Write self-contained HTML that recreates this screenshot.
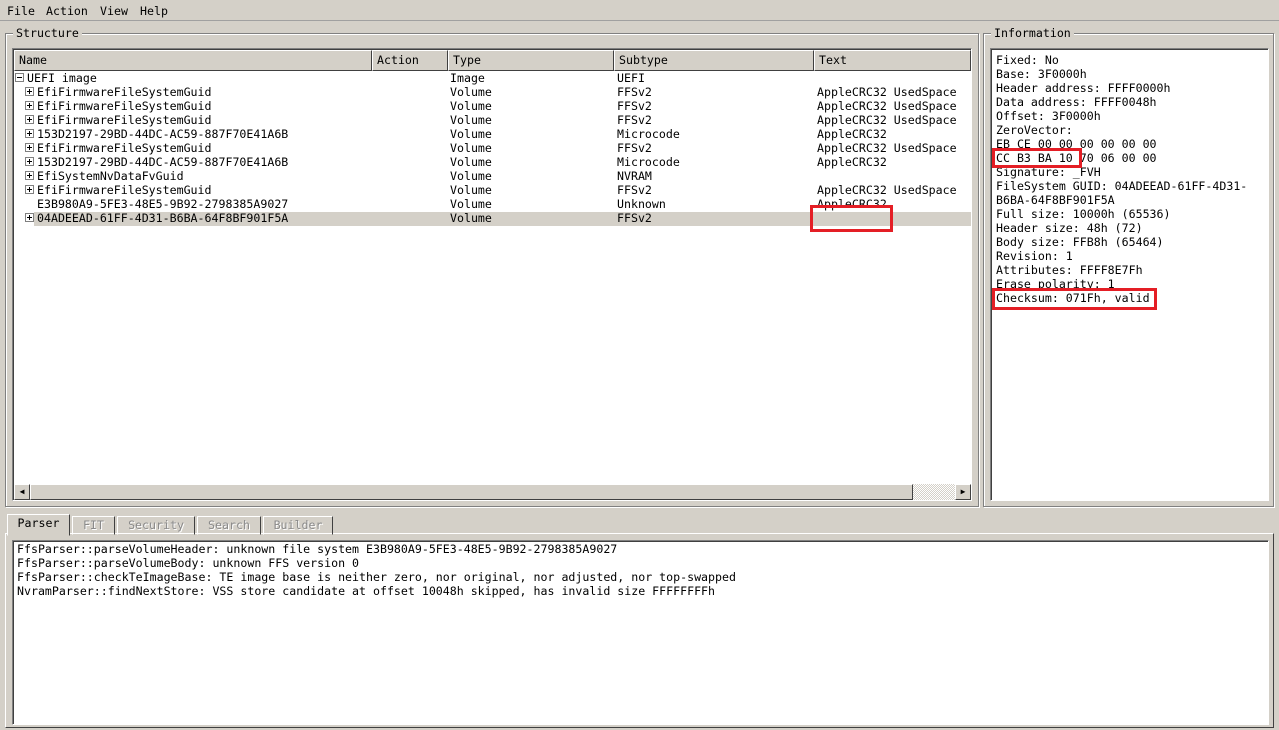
<!DOCTYPE html>
<html><head><meta charset="utf-8"><style>
*{margin:0;padding:0;box-sizing:border-box}
body{width:1279px;height:730px;background:#d4d0c8;position:relative;overflow:hidden;font-family:"DejaVu Sans Mono","Liberation Mono",monospace;font-size:11.6px;color:#000}
.a{position:absolute;white-space:pre;line-height:14px}
.grp{position:absolute;border:1px solid #808080;box-shadow:1px 1px 0 #fff, inset 1px 1px 0 #fff}
.lbl{position:absolute;background:#d4d0c8;padding:0 3px;line-height:14px}
.sunk{position:absolute;background:#fff;border:1px solid;border-color:#808080 #fff #fff #808080;box-shadow:inset 1px 1px 0 #404040}
.hd{position:absolute;top:0;height:21px;border:1px solid;border-color:#fff #404040 #404040 #fff;background:#d4d0c8;line-height:19px;padding-left:4px}
.red{position:absolute;border:3px solid #e41e25}
.pl{position:absolute;width:9px;height:9px;border:1px solid #808080;background:#fff}
.pl:before{content:"";position:absolute;left:1px;top:3px;width:5px;height:1px;background:#000}
.pl.p:after{content:"";position:absolute;left:3px;top:1px;width:1px;height:5px;background:#000}
.tab{position:absolute;top:516px;height:19px;border:1px solid;border-color:#fff #404040 transparent #fff;line-height:17px;text-align:center;color:#8a8a8a;text-shadow:1px 1px 0 #fff}
</style></head><body>
<div class="a" style="left:7px;top:4px">File</div>
<div class="a" style="left:46px;top:4px">Action</div>
<div class="a" style="left:100px;top:4px">View</div>
<div class="a" style="left:140px;top:4px">Help</div>
<div style="position:absolute;left:0;top:20px;width:1279px;height:1px;background:#a0a0a0"></div>

<div class="grp" style="left:5px;top:33px;width:974px;height:474px"></div>
<div class="lbl" style="left:13px;top:26px">Structure</div>
<div class="grp" style="left:983px;top:33px;width:291px;height:474px"></div>
<div class="lbl" style="left:991px;top:26px">Information</div>

<div class="sunk" style="left:12px;top:48px;width:960px;height:453px">
<div class="hd" style="left:1px;top:1px;width:358px">Name</div>
<div class="hd" style="left:359px;top:1px;width:76px">Action</div>
<div class="hd" style="left:435px;top:1px;width:166px">Type</div>
<div class="hd" style="left:601px;top:1px;width:200px">Subtype</div>
<div class="hd" style="left:801px;top:1px;width:157px">Text</div>
<div style="position:absolute;left:21px;top:163px;width:937px;height:14px;background:#d4d0c8"></div>
<div style="position:absolute;left:1px;top:435px;width:957px;height:16px;background:#d4d0c8">
<div style="position:absolute;left:0;top:0;width:16px;height:16px;border:1px solid;border-color:#fff #404040 #404040 #fff;font-size:8px;line-height:14px;text-align:center">◀</div>
<div style="position:absolute;left:16px;top:0;width:883px;height:16px;border:1px solid;border-color:#fff #404040 #404040 #fff"></div>
<div style="position:absolute;left:899px;top:0;width:42px;height:16px;background:repeating-conic-gradient(#fff 0 25%,#d4d0c8 0 50%) 0 0/2px 2px"></div>
<div style="position:absolute;left:941px;top:0;width:16px;height:16px;border:1px solid;border-color:#fff #404040 #404040 #fff;font-size:8px;line-height:14px;text-align:center">▶</div>
</div>
</div>
<div class="pl" style="left:15px;top:73px"></div>
<div class="pl p" style="left:25px;top:87px"></div><div class="pl p" style="left:25px;top:101px"></div><div class="pl p" style="left:25px;top:115px"></div><div class="pl p" style="left:25px;top:129px"></div><div class="pl p" style="left:25px;top:143px"></div><div class="pl p" style="left:25px;top:157px"></div><div class="pl p" style="left:25px;top:171px"></div><div class="pl p" style="left:25px;top:185px"></div><div class="pl p" style="left:25px;top:213px"></div>
<div class="a" style="left:27px;top:71px">UEFI image</div>
<div class="a" style="left:37px;top:85px">EfiFirmwareFileSystemGuid
EfiFirmwareFileSystemGuid
EfiFirmwareFileSystemGuid
153D2197-29BD-44DC-AC59-887F70E41A6B
EfiFirmwareFileSystemGuid
153D2197-29BD-44DC-AC59-887F70E41A6B
EfiSystemNvDataFvGuid
EfiFirmwareFileSystemGuid
E3B980A9-5FE3-48E5-9B92-2798385A9027
04ADEEAD-61FF-4D31-B6BA-64F8BF901F5A</div>
<div class="a" style="left:450px;top:71px">Image
Volume
Volume
Volume
Volume
Volume
Volume
Volume
Volume
Volume
Volume</div>
<div class="a" style="left:617px;top:71px">UEFI
FFSv2
FFSv2
FFSv2
Microcode
FFSv2
Microcode
NVRAM
FFSv2
Unknown
FFSv2</div>
<div class="a" style="left:817px;top:85px;width:152px;overflow:hidden">AppleCRC32 UsedSpace
AppleCRC32 UsedSpace
AppleCRC32 UsedSpace
AppleCRC32
AppleCRC32 UsedSpace
AppleCRC32

AppleCRC32 UsedSpace
AppleCRC32</div>
<div class="red" style="left:810px;top:205px;width:83px;height:27px"></div>

<div class="sunk" style="left:990px;top:48px;width:279px;height:453px"></div>
<div class="a" style="left:996px;top:53px">Fixed: No
Base: 3F0000h
Header address: FFFF0000h
Data address: FFFF0048h
Offset: 3F0000h
ZeroVector:
EB CE 00 00 00 00 00 00
CC B3 BA 10 70 06 00 00
Signature: _FVH
FileSystem GUID: 04ADEEAD-61FF-4D31-
B6BA-64F8BF901F5A
Full size: 10000h (65536)
Header size: 48h (72)
Body size: FFB8h (65464)
Revision: 1
Attributes: FFFF8E7Fh
Erase polarity: 1
Checksum: 071Fh, valid</div>
<div class="red" style="left:992px;top:148px;width:90px;height:20px"></div>
<div class="red" style="left:992px;top:288px;width:165px;height:22px"></div>

<div style="position:absolute;left:5px;top:533px;width:1269px;height:195px;border:1px solid;border-color:#fff #404040 #404040 #fff"></div>
<div class="tab" style="left:7px;top:514px;height:22px;width:63px;color:#000;text-shadow:none;background:#d4d0c8">Parser</div>
<div class="tab" style="left:72px;width:43px">FIT</div>
<div class="tab" style="left:117px;width:78px">Security</div>
<div class="tab" style="left:197px;width:64px">Search</div>
<div class="tab" style="left:263px;width:70px">Builder</div>
<div class="sunk" style="left:12px;top:540px;width:1257px;height:185px"></div>
<div class="a" style="left:17px;top:542px">FfsParser::parseVolumeHeader: unknown file system E3B980A9-5FE3-48E5-9B92-2798385A9027
FfsParser::parseVolumeBody: unknown FFS version 0
FfsParser::checkTeImageBase: TE image base is neither zero, nor original, nor adjusted, nor top-swapped
NvramParser::findNextStore: VSS store candidate at offset 10048h skipped, has invalid size FFFFFFFFh</div>
</body></html>
